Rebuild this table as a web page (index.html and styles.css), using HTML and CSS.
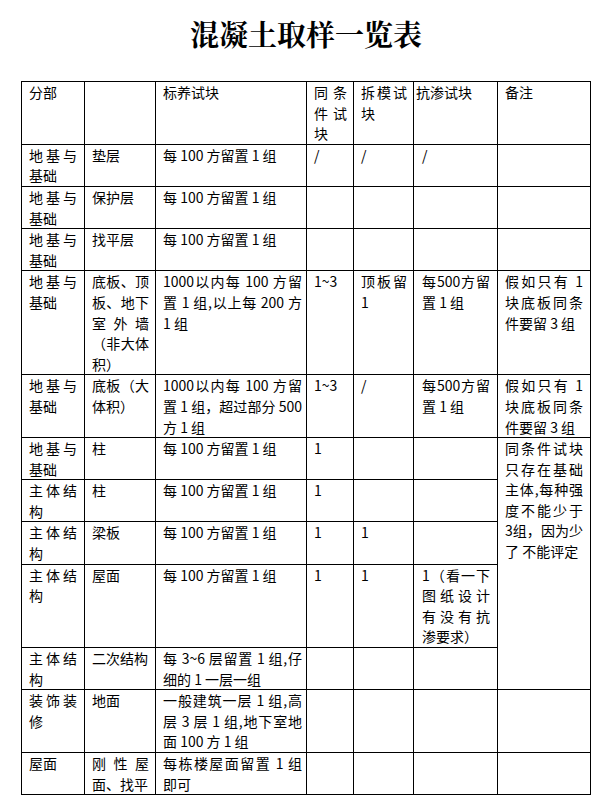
FILE: index.html
```html
<!DOCTYPE html>
<html lang="zh-CN">
<head>
<meta charset="utf-8">
<title>混凝土取样一览表</title>
<link rel="stylesheet" href="styles.css">
</head>
<body>
<div class="sheet">
  <h1 class="title">混凝土取样一览表</h1>
  <table class="grid">
    <thead>
      <tr>
        <th class="w1">分部</th>
        <th class="w2"></th>
        <th class="w3">标养试块</th>
        <th class="w4">同条件试块</th>
        <th class="w5">拆模试块</th>
        <th class="w6 tight">抗渗试块</th>
        <th class="w7">备注</th>
      </tr>
    </thead>
    <tbody>
      <tr>
        <td>地基与基础</td>
        <td>垫层</td>
        <td>每 100 方留置 1 组</td>
        <td>/</td>
        <td>/</td>
        <td>/</td>
        <td></td>
      </tr>
      <tr>
        <td>地基与基础</td>
        <td>保护层</td>
        <td>每 100 方留置 1 组</td>
        <td></td>
        <td></td>
        <td></td>
        <td></td>
      </tr>
      <tr>
        <td>地基与基础</td>
        <td>找平层</td>
        <td>每 100 方留置 1 组</td>
        <td></td>
        <td></td>
        <td></td>
        <td></td>
      </tr>
      <tr>
        <td>地基与基础</td>
        <td>底板、顶板、地下室外墙（非大体积）</td>
        <td>1000以内每 100 方留置 1 组,以上每 200 方 1 组</td>
        <td>1~3</td>
        <td>顶板留1</td>
        <td>每500方留置 1 组</td>
        <td>假如只有 1 块底板同条件要留 3 组</td>
      </tr>
      <tr>
        <td>地基与基础</td>
        <td>底板（大体积）</td>
        <td>1000以内每 100 方留置 1 组，超过部分 500 方 1 组</td>
        <td>1~3</td>
        <td>/</td>
        <td>每500方留置 1 组</td>
        <td>假如只有 1 块底板同条件要留 3 组</td>
      </tr>
      <tr>
        <td>地基与基础</td>
        <td>柱</td>
        <td>每 100 方留置 1 组</td>
        <td>1</td>
        <td></td>
        <td></td>
        <td rowspan="5">同条件试块只存在基础主体,每种强度不能少于 3组，因为少了 不能评定</td>
      </tr>
      <tr>
        <td>主体结构</td>
        <td>柱</td>
        <td>每 100 方留置 1 组</td>
        <td>1</td>
        <td></td>
        <td></td>
      </tr>
      <tr>
        <td>主体结构</td>
        <td>梁板</td>
        <td>每 100 方留置 1 组</td>
        <td>1</td>
        <td>1</td>
        <td></td>
      </tr>
      <tr>
        <td>主体结构</td>
        <td>屋面</td>
        <td>每 100 方留置 1 组</td>
        <td>1</td>
        <td>1</td>
        <td>1（看一下图纸设计有没有抗渗要求）</td>
      </tr>
      <tr>
        <td>主体结构</td>
        <td>二次结构</td>
        <td>每 3~6 层留置 1 组,仔细的 1 一层一组</td>
        <td></td>
        <td></td>
        <td></td>
      </tr>
      <tr>
        <td>装饰装修</td>
        <td>地面</td>
        <td>一般建筑一层 1 组,高层 3 层 1 组,地下室地面 100 方 1 组</td>
        <td></td>
        <td></td>
        <td></td>
        <td></td>
      </tr>
      <tr>
        <td>屋面</td>
        <td><span class="spread">刚性屋</span>面、找平</td>
        <td>每栋楼屋面留置 1 组即可</td>
        <td></td>
        <td></td>
        <td></td>
        <td></td>
      </tr>
    </tbody>
  </table>
</div>
</body>
</html>
```

FILE: styles.css
```css
html, body {
  margin: 0;
  padding: 0;
  background: #fff;
  color: #000;
}

body {
  font-family: "Noto Sans CJK SC", "Noto Sans", sans-serif;
  font-size: 14px;
}

.sheet {
  width: 570px;
  padding-left: 21px;
}

.title {
  margin: 19px 0 0 0;
  height: 62px;
  font-family: "Noto Serif CJK SC", "Noto Sans CJK SC", serif;
  font-size: 29px;
  line-height: 29px;
  font-weight: 700;
  text-align: center;
  letter-spacing: 0;
}

.grid {
  box-sizing: border-box;
  width: 570px;
  table-layout: fixed;
  border-collapse: separate;
  border-spacing: 0;
  border-top: 1px solid #000;
  border-left: 1px solid #000;
}

.grid th,
.grid td {
  box-sizing: border-box;
  border-right: 1px solid #000;
  border-bottom: 1px solid #000;
  padding: 0 7px;
  font-weight: 400;
  font-size: 14px;
  line-height: 20.6px;
  text-align: justify;
  vertical-align: top;
  text-spacing-trim: space-all;
  word-break: normal;
}

.w1 { width: 63px; }
.w2 { width: 71px; }
.w3 { width: 151px; }
.w4 { width: 47px; }
.w5 { width: 60px; }
.w6 { width: 84px; }
.w7 { width: 93px; }

.grid tr > :nth-child(2) { padding-right: 6px; }
.grid tr > :nth-child(3) { padding-right: 4px; }
.grid tr > :nth-child(4) { padding-right: 6px; }
.grid tr > :nth-child(5) { padding-right: 6px; }
.grid tr > :nth-child(6) { padding-left: 8px; }
.grid th.tight { padding-left: 2px; }

.spread {
  display: block;
  text-align: justify;
  text-align-last: justify;
}
```
